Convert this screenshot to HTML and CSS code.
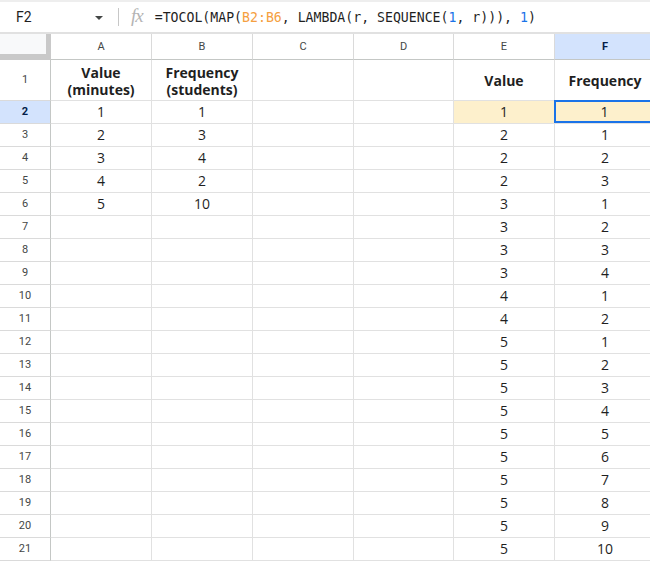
FILE: index.html
```html
<!DOCTYPE html>
<html lang="en">
<head>
  <meta charset="UTF-8" />
  <title>Sheet</title>
  <link rel="stylesheet" href="styles.css">
</head>
<body>

  <div class="formula-bar">
    <div class="name-box">F2</div>
    <div class="name-arrow"></div>
    <div class="bar-sep"></div>
    <div class="fx">fx</div>
    <div class="formula">=TOCOL(MAP(<span class="ref">B2:B6</span>, LAMBDA(r, SEQUENCE(<span class="num">1</span>, r))), <span class="num">1</span>)</div>
  </div>

  <div class="sheet">
    <div class="row col-head">
      <div class="cell corner"></div>
      <div class="cell">A</div>
      <div class="cell">B</div>
      <div class="cell">C</div>
      <div class="cell">D</div>
      <div class="cell">E</div>
      <div class="cell active">F</div>
    </div>

    <div class="row first">
      <div class="cell rh">1</div>
      <div class="cell bold">Value<br>(minutes)</div>
      <div class="cell bold">Frequency<br>(students)</div>
      <div class="cell"></div>
      <div class="cell"></div>
      <div class="cell bold">Value</div>
      <div class="cell bold">Frequency</div>
    </div>

    <div class="row">
      <div class="cell rh active">2</div>
      <div class="cell">1</div><div class="cell">1</div><div class="cell"></div><div class="cell"></div>
      <div class="cell hl">1</div><div class="cell hl selected">1</div>
    </div>
    <div class="row">
      <div class="cell rh">3</div>
      <div class="cell">2</div><div class="cell">3</div><div class="cell"></div><div class="cell"></div>
      <div class="cell">2</div><div class="cell">1</div>
    </div>
    <div class="row">
      <div class="cell rh">4</div>
      <div class="cell">3</div><div class="cell">4</div><div class="cell"></div><div class="cell"></div>
      <div class="cell">2</div><div class="cell">2</div>
    </div>
    <div class="row">
      <div class="cell rh">5</div>
      <div class="cell">4</div><div class="cell">2</div><div class="cell"></div><div class="cell"></div>
      <div class="cell">2</div><div class="cell">3</div>
    </div>
    <div class="row">
      <div class="cell rh">6</div>
      <div class="cell">5</div><div class="cell">10</div><div class="cell"></div><div class="cell"></div>
      <div class="cell">3</div><div class="cell">1</div>
    </div>
    <div class="row">
      <div class="cell rh">7</div>
      <div class="cell"></div><div class="cell"></div><div class="cell"></div><div class="cell"></div>
      <div class="cell">3</div><div class="cell">2</div>
    </div>
    <div class="row">
      <div class="cell rh">8</div>
      <div class="cell"></div><div class="cell"></div><div class="cell"></div><div class="cell"></div>
      <div class="cell">3</div><div class="cell">3</div>
    </div>
    <div class="row">
      <div class="cell rh">9</div>
      <div class="cell"></div><div class="cell"></div><div class="cell"></div><div class="cell"></div>
      <div class="cell">3</div><div class="cell">4</div>
    </div>
    <div class="row">
      <div class="cell rh">10</div>
      <div class="cell"></div><div class="cell"></div><div class="cell"></div><div class="cell"></div>
      <div class="cell">4</div><div class="cell">1</div>
    </div>
    <div class="row">
      <div class="cell rh">11</div>
      <div class="cell"></div><div class="cell"></div><div class="cell"></div><div class="cell"></div>
      <div class="cell">4</div><div class="cell">2</div>
    </div>
    <div class="row">
      <div class="cell rh">12</div>
      <div class="cell"></div><div class="cell"></div><div class="cell"></div><div class="cell"></div>
      <div class="cell">5</div><div class="cell">1</div>
    </div>
    <div class="row">
      <div class="cell rh">13</div>
      <div class="cell"></div><div class="cell"></div><div class="cell"></div><div class="cell"></div>
      <div class="cell">5</div><div class="cell">2</div>
    </div>
    <div class="row">
      <div class="cell rh">14</div>
      <div class="cell"></div><div class="cell"></div><div class="cell"></div><div class="cell"></div>
      <div class="cell">5</div><div class="cell">3</div>
    </div>
    <div class="row">
      <div class="cell rh">15</div>
      <div class="cell"></div><div class="cell"></div><div class="cell"></div><div class="cell"></div>
      <div class="cell">5</div><div class="cell">4</div>
    </div>
    <div class="row">
      <div class="cell rh">16</div>
      <div class="cell"></div><div class="cell"></div><div class="cell"></div><div class="cell"></div>
      <div class="cell">5</div><div class="cell">5</div>
    </div>
    <div class="row">
      <div class="cell rh">17</div>
      <div class="cell"></div><div class="cell"></div><div class="cell"></div><div class="cell"></div>
      <div class="cell">5</div><div class="cell">6</div>
    </div>
    <div class="row">
      <div class="cell rh">18</div>
      <div class="cell"></div><div class="cell"></div><div class="cell"></div><div class="cell"></div>
      <div class="cell">5</div><div class="cell">7</div>
    </div>
    <div class="row">
      <div class="cell rh">19</div>
      <div class="cell"></div><div class="cell"></div><div class="cell"></div><div class="cell"></div>
      <div class="cell">5</div><div class="cell">8</div>
    </div>
    <div class="row">
      <div class="cell rh">20</div>
      <div class="cell"></div><div class="cell"></div><div class="cell"></div><div class="cell"></div>
      <div class="cell">5</div><div class="cell">9</div>
    </div>
    <div class="row">
      <div class="cell rh">21</div>
      <div class="cell"></div><div class="cell"></div><div class="cell"></div><div class="cell"></div>
      <div class="cell">5</div><div class="cell">10</div>
    </div>
  </div>

</body>
</html>
```

FILE: styles.css
```css
body {
  margin: 0;
  width: 650px;
  height: 561px;
  overflow: hidden;
  background: #fff;
  font-family: 'Open Sans', sans-serif;
  color: #1f1f1f;
}

/* formula bar */
.formula-bar {
  height: 30px;
  border-top: 2px solid #eeeeee;
  border-bottom: 2px solid #e1e1e1;
  display: flex;
  align-items: center;
  font-family: Roboto, 'Liberation Sans', sans-serif;
}
.name-box {
  width: 79px;
  padding-left: 16px;
  font-size: 14px;
  color: #1f1f1f;
}
.name-arrow {
  width: 0;
  height: 0;
  border-left: 4px solid transparent;
  border-right: 4px solid transparent;
  border-top: 4px solid #444746;
  margin-top: 1px;
}
.bar-sep {
  width: 1px;
  height: 18px;
  background: #c7c7c7;
  margin-left: 15px;
}
.fx {
  font-family: 'Liberation Serif', serif;
  font-style: italic;
  font-size: 19px;
  color: #b4b4b4;
  margin-left: 12px;
  margin-top: -3px;
  letter-spacing: -1px;
}
.formula {
  margin-left: 12px;
  font-family: 'DejaVu Sans Mono', monospace;
  font-size: 13.2px;
  color: #1f1f1f;
  white-space: nowrap;
}
.formula .ref {
  color: #f5a041;
}
.formula .num {
  color: #1a73e8;
}

/* grid */
.sheet {
  width: 656px;
}
.row {
  display: grid;
  grid-template-columns: 51px 101px 101px 101px 100px 101px 101px;
  height: 23px;
}
.row.first {
  height: 41px;
}
.row.col-head {
  height: 26px;
}
.cell {
  box-sizing: border-box;
  border-right: 1px solid #e1e1e1;
  border-bottom: 1px solid #e1e1e1;
  display: flex;
  align-items: center;
  justify-content: center;
  text-align: center;
  font-size: 14px;
  line-height: 17.5px;
}
.bold {
  font-weight: 700;
}
.first .bold {
  padding-top: 2px;
}

.col-head .cell {
  font-family: Roboto, 'Liberation Sans', sans-serif;
  font-size: 11px;
  color: #444746;
  border-bottom-color: #c4c7c5;
  border-right-color: #dadada;
  padding-top: 1px;
}
.col-head .corner {
  background: #f8f9fa;
  border-right: 5px solid #c9c9c9;
  border-bottom: 6px solid #c9c9c9;
}
.rh {
  font-family: Roboto, 'Liberation Sans', sans-serif;
  font-size: 11px;
  color: #444746;
  border-right-color: #c4c7c5;
  border-bottom-color: #dadada;
}
.cell.active {
  background: #d3e3fd;
  color: #041e49;
  font-weight: 700;
}
.hl {
  background: #fdf0cc;
}
.selected {
  box-shadow: inset 0 0 0 2px #1a73e8;
  margin: -1px 0 0 -1px;
  height: calc(100% + 1px);
}
```
